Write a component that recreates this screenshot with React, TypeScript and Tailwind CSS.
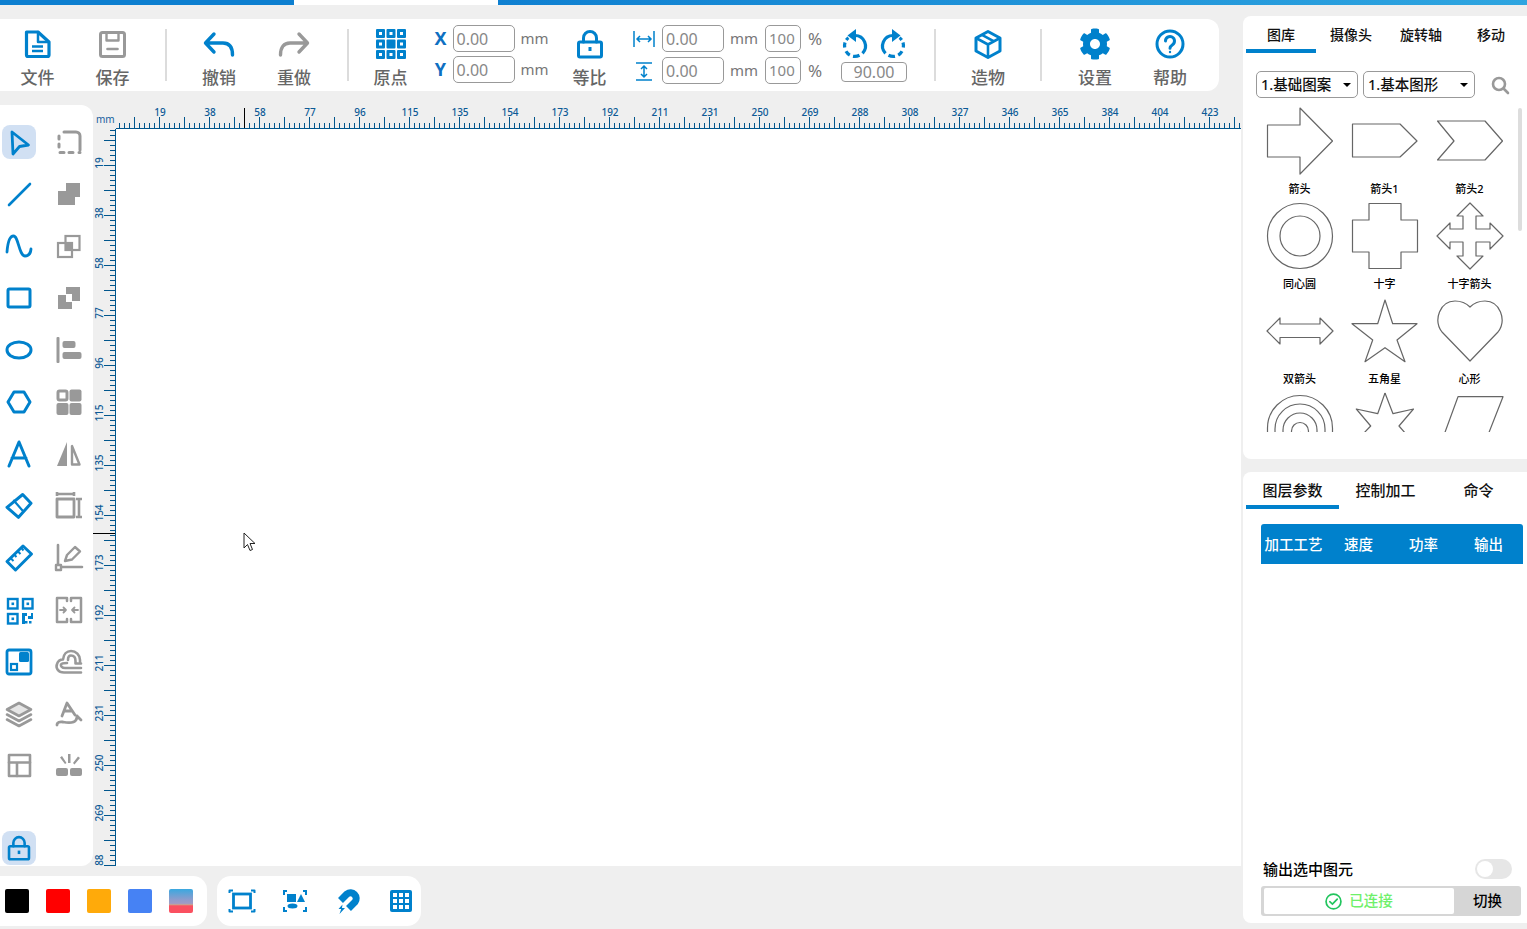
import React from "react";
import { FaCog } from "react-icons/fa";

const B = "#0081cc";
const G = "#999999";
const FONT = { fontFamily: '"Noto Sans","Noto Sans CJK SC",sans-serif' };

type IP = { c?: string; children: React.ReactNode; s?: number; w?: number; h?: number; vb?: string };
function Ico({ c = B, children, s = 3, w = 30, h = 30, vb = "0 0 30 30" }: IP) {
  return (
    <svg width={w} height={h} viewBox={vb} fill="none" stroke={c} strokeWidth={s} strokeLinecap="round" strokeLinejoin="round" className="block shrink-0">
      {children}
    </svg>
  );
}

const originCells = [0, 1, 2].flatMap((r) => [0, 1, 2].map((k) => ({ r, k })));

const lockBody = (
  <>
    <path d="M8.5 13V9a6.5 6.5 0 0 1 13 0v4" strokeWidth={3} />
    <rect x="3.5" y="13" width="23" height="15" rx="1.5" />
    <rect x="13.5" y="18" width="3" height="4" fill={B} stroke="none" />
  </>
);

const top: Record<string, React.ReactNode> = {
  file: (
    <Ico>
      <path d="M3.500 3h11.500l11 10v13a1.5 1.5 0 0 1-1.5 1.5h-19.500A1.500 1.500 0 0 1 3.500 26Z" strokeWidth={3.200} />
      <path d="M15 3v10h10" strokeWidth={2.500} />
      <path d="M9 17.500h11M9 22h11" strokeWidth={2.400} strokeLinecap="butt" />
    </Ico>
  ),
  save: (
    <Ico c={G}>
      <rect x="2.500" y="3.500" width="24" height="24" rx="2" />
      <path d="M8.500 4v7.500h12V4" strokeWidth={2.400} />
      <path d="M9.500 20h10" strokeWidth={2.600} />
    </Ico>
  ),
  undo: (
    <Ico w={32} vb="0 0 32 30" s={3.400}>
      <path d="M11 5 2.500 14l8.500 9M3 14h17c6 0 9.500 4 9.500 12" />
    </Ico>
  ),
  redo: (
    <Ico w={32} vb="0 0 32 30" c={G} s={3.400}>
      <path d="M21 5l8.500 9L21 23M29 14H12C6 14 2.500 18 2.500 26" />
    </Ico>
  ),
  origin: (
    <svg width="30" height="30" viewBox="0 0 30 30" className="block">
      {originCells.map(({ r, k }) => (
        <g key={`${r}${k}`}>
          <rect x={k * 10.5} y={r * 10.5} width="9" height="9" rx="1" fill={B} />
          {!(r === 1 && k === 1) && <rect x={k * 10.5 + 3} y={r * 10.5 + 3} width="3" height="3" fill="#fff" />}
        </g>
      ))}
    </svg>
  ),
  lock: <Ico>{lockBody}</Ico>,
  box: (
    <Ico>
      <path d="M15 2.500 27 9v13l-12 6.500L3 22V9Z" />
      <path d="M3 9l12 6.500L27 9M15 15.500v13M9 5.800l12 6.500" strokeWidth={2.600} strokeLinecap="butt" />
    </Ico>
  ),
  help: (
    <Ico>
      <circle cx="15" cy="15" r="13" />
      <path d="M10.500 12a4.500 4.500 0 1 1 7 3.700c-1.700 1.100-2.500 2-2.500 3.600" />
      <circle cx="15" cy="23" r="1.200" fill={B} stroke="none" />
    </Ico>
  ),
};

function Rotate({ flip }: { flip?: boolean }) {
  return (
    <svg width="30" height="30" viewBox="0 0 30 30" className={flip ? "block -scale-x-100" : "block"} fill="none" stroke={B} strokeWidth="3.200">
      <path d="M15 6.500A10.500 10.500 0 0 1 22.500 24.300" />
      <path d="M19.500 26.300A10.500 10.500 0 0 1 13 27.300" />
      <path d="M9.800 26.200A10.500 10.500 0 0 1 6 22.300" />
      <path d="M4.700 18.500A10.500 10.500 0 0 1 5 13.500" />
      <path d="M6.300 11A10.500 10.500 0 0 1 8.500 8.800" />
      <path d="M16 0 7.500 6.500 16 13Z" fill={B} stroke="none" />
    </svg>
  );
}

const side: [React.ReactNode, React.ReactNode][] = [
  [
    <Ico s={2.800}><path d="M8 5 24.500 18 15.500 19.500 9 27Z" /></Ico>,
    <Ico c={G} s={3}><path d="M10 5h12a4 4 0 0 1 4 4v14M26 25.500h-1M19 25.500h-4M10 25.500H6M5 20v-3M5 12V9" /></Ico>,
  ],
  [
    <Ico s={2.600}><path d="M5 26 26 5" /></Ico>,
    <svg width="30" height="30" viewBox="0 0 30 30" className="block"><path d="M12 4h14v14h-5v8H4V12h8Z" fill={G} /></svg>,
  ],
  [
    <Ico s={2.800}><path d="M3 21C4 8 7 5 9.500 5c5 0 5.500 20 11.500 20 3 0 5.500-2 6-7" /></Ico>,
    <svg width="30" height="30" viewBox="0 0 30 30" className="block">
      <rect x="11.500" y="5" width="14" height="14" fill="none" stroke={G} strokeWidth="2.200" />
      <rect x="4" y="12" width="14" height="14" fill="none" stroke={G} strokeWidth="2.200" />
      <rect x="12" y="12.500" width="6" height="6" fill={G} />
    </svg>,
  ],
  [
    <Ico s={3}><rect x="4" y="6" width="22" height="18" rx="1.500" /></Ico>,
    <svg width="30" height="30" viewBox="0 0 30 30" className="block"><path d="M12 4h14v14h-8v-7h-6Z M4 12h8v7h6v7H4Z" fill={G} /></svg>,
  ],
  [
    <Ico s={3}><ellipse cx="15" cy="15" rx="12" ry="8" /></Ico>,
    <svg width="30" height="30" viewBox="0 0 30 30" className="block">
      <rect x="2.500" y="2" width="3" height="26" rx="1" fill={G} />
      <rect x="8.500" y="6" width="13" height="7" rx="2" fill={G} />
      <rect x="8.500" y="17" width="19" height="7" rx="2" fill={G} />
    </svg>,
  ],
  [
    <Ico s={3}><path d="M10 5h10l6 10-6 10H10L4 15Z" /></Ico>,
    <svg width="30" height="30" viewBox="0 0 30 30" className="block">
      <rect x="4" y="4" width="9" height="9" rx="1.500" fill="none" stroke={G} strokeWidth="3" />
      <rect x="15.500" y="2.500" width="12" height="12" rx="2" fill={G} />
      <rect x="2.500" y="16" width="12" height="12" rx="2" fill={G} />
      <rect x="15.500" y="16" width="12" height="12" rx="2" fill={G} />
    </svg>,
  ],
  [
    <Ico s={3}><path d="M5 27 15 3l10 24M8 19h14" /></Ico>,
    <svg width="30" height="30" viewBox="0 0 30 30" className="block">
      <path d="M13 3v24H3Z" fill={G} />
      <path d="M18 7v18.500H25.500Z" fill="none" stroke={G} strokeWidth="2.400" strokeLinejoin="round" />
    </svg>,
  ],
  [
    <Ico s={3}><path d="M18.700 3.500 27 12.300 14.500 26.300 3 16.300Z" /><path d="M10 9.700 18.700 19.700" strokeWidth={2.200} /></Ico>,
    <Ico c={G} s={2.800}>
      <rect x="3" y="8" width="17" height="18" />
      <path d="M3 3h17M25 8v18M22 8h6M22 26h6M3 1v4M20 1v4" strokeWidth={2.600} strokeLinecap="butt" />
    </Ico>,
  ],
  [
    <Ico s={3}><path d="M19 3 27.500 11 11.500 27 3 18.500Z" /><path d="M6.500 15l3 3M10 11.500l2.500 2.500M13.500 8l3 3M17 4.500l2.500 3" strokeWidth={2} strokeLinecap="butt" /></Ico>,
    <Ico c={G} s={2.400}>
      <path d="M4 2v22M4 24h24" strokeWidth={2.600} />
      <rect x="2" y="22" width="5" height="5" fill="#fff" />
      <path d="M11 18l2-6L21 4l5 4.500-8 8Z M11 18l7-1.500" />
    </Ico>,
  ],
  [
    <svg width="30" height="30" viewBox="0 0 30 30" className="block">
      {[[3, 3], [18, 3], [3, 18]].map(([x, y]) => (
        <g key={`${x}${y}`}>
          <rect x={x + 1} y={y + 1} width="9.500" height="9.500" fill="none" stroke={B} strokeWidth="2.400" />
          <rect x={x + 4.500} y={y + 4.500} width="2.600" height="2.600" fill={B} />
        </g>
      ))}
      <path d="M18 18h5v3h4v-3h2v6h-5v-3h-3v8h-3ZM25 26h2.500v2.500H25ZM21 26h2.500v2.500H21Z" fill={B} />
    </svg>,
    <Ico c={G} s={2.500}>
      <path d="M12 3H3v24h9M18 3h9v24h-9M13 3v3M17 3v3M13 24v3M17 24v3" />
      <path d="M6 15h6M9.500 12.500l2.500 2.500-2.500 2.500M24 15h-6M20.500 12.500 18 15l2.500 2.500" strokeWidth={1.800} />
    </Ico>,
  ],
  [
    <svg width="30" height="30" viewBox="0 0 30 30" className="block">
      <rect x="3" y="3" width="24" height="24" rx="2" fill="none" stroke={B} strokeWidth="2.800" />
      <rect x="15" y="5" width="10" height="10" rx="1.500" fill={B} />
      <rect x="7" y="17" width="6" height="6" fill="none" stroke={B} strokeWidth="2.200" />
    </svg>,
    <Ico c={G} s={2.600}>
      <path d="M27 25.500H10C4 25.500 1.500 21 3 17 4 14 6.500 12.500 9 12.500 9.500 7 13 4 17 4 22 4 26 8 26 13V15" />
      <path d="M27 21H11C8 21 6.500 19 7 17.500 7.500 16.500 9 16 13 16M14 13C14 10 15 8.500 17 8.500 20 8.500 21.500 10.500 21.500 14V16.500H27" />
    </Ico>,
  ],
  [
    <svg width="30" height="30" viewBox="0 0 30 30" className="block" fill="none" stroke={G} strokeWidth="2.600" strokeLinejoin="round" strokeLinecap="round">
      <path d="M15 4 27 10.500 15 17 3 10.500Z" fill="#9a9a9a" fillOpacity="0.25" />
      <path d="M3 15.500 15 22 27 15.500M3 20.500 15 27 27 20.500" />
    </svg>,
    <Ico c={G} s={2.800}>
      <path d="M8 17 13 4 21 16M10.500 12h7" />
      <path d="M3 26c0-3 3-3.500 6-3 5 1 11 1 13-2 1-1.500 1-3 1-4M23 17l4 4" />
    </Ico>,
  ],
  [
    <Ico c={G} s={2.600}><rect x="5" y="4" width="21" height="21" /><path d="M5 11.500h21M13 11.500V25" /></Ico>,
    <svg width="30" height="30" viewBox="0 0 30 30" className="block" fill={G}>
      <rect x="2" y="17" width="12" height="8" rx="2" />
      <rect x="16" y="17" width="12" height="8" rx="2" />
      <path d="M14 3h2.500v9H14ZM6 6.500 8 5l4.500 7-1.500 1ZM24 5.500 26 7l-5.500 6.500-1.500-1.500Z" />
    </svg>,
  ],
];

function ToolBtn({ icon, label, cls = "" }: { icon: React.ReactNode; label: string; cls?: string }) {
  return (
    <div className={`w-[75px] shrink-0 flex flex-col items-center pt-[10px] ${cls}`}>
      <div className="h-[30px] flex items-center justify-center">{icon}</div>
      <div className="mt-[7px] text-[17px] leading-[24px] font-medium text-[#666666]">{label}</div>
    </div>
  );
}

function Divider({ cls = "" }: { cls?: string }) {
  return <div className={`w-[2px] h-[52px] self-center shrink-0 bg-[#dcdcdc] ${cls}`} />;
}

function Field({ w, text, size = "text-[16px]" }: { w: string; text: string; size?: string }) {
  return (
    <div className={`${w} h-[27px] shrink-0 border border-[#999999] rounded-[5px] flex items-center pl-[3px] ${size} text-[#888888]`}>{text}</div>
  );
}

const Unit = ({ t, cls }: { t: string; cls: string }) => (
  <div className={`${cls} shrink-0 text-[15px] leading-[27px] text-[#777777]`}>{t}</div>
);
const Pct = () => <div className="ml-[7px] w-[15px] shrink-0 text-[17px] leading-[27px] text-[#777777]">%</div>;

const xLabels = [19, 38, 58, 77, 96, 115, 135, 154, 173, 192, 211, 231, 250, 269, 288, 308, 327, 346, 365, 384, 404, 423];
const yLabels = [19, 38, 58, 77, 96, 115, 135, 154, 173, 192, 211, 231, 250, 269, 288];
const RC = "#00558c";
const RT = "#0c5a96";

function RulerX() {
  const W = 1125;
  const ticks: React.ReactNode[] = [];
  for (let i = 0; 3.5 + i * 5 < W; i++) {
    const x = 3.5 + i * 5;
    const tall = (x - 18.5) % 25 === 0;
    ticks.push(<line key={i} x1={x} x2={x} y1={tall ? 12 : 18} y2={23} stroke={RC} strokeWidth="1" />);
  }
  return (
    <svg width={W} height="24" className="block shrink-0">
      {ticks}
      <line x1="0" x2={W} y1="23.500" y2="23.500" stroke={RC} strokeWidth="1" />
      <line x1="128.500" x2="128.500" y1="3" y2="23" stroke="#000" strokeWidth="1" />
      {xLabels.map((n, i) => (
        <text key={n} x={44 + i * 50} y="10.500" textAnchor="middle" fontSize="10" fontWeight="500" fill={RT} fontFamily="Noto Sans">{n}</text>
      ))}
    </svg>
  );
}

function RulerY() {
  const H = 738;
  const ticks: React.ReactNode[] = [];
  for (let i = 0; 1.5 + i * 5 < H; i++) {
    const y = 1.5 + i * 5;
    const tall = (y - 11.5) % 25 === 0;
    ticks.push(<line key={i} y1={y} y2={y} x1={tall ? 11 : 17} x2={23} stroke={RC} strokeWidth="1" />);
  }
  return (
    <svg width="23" height={H} className="block shrink-0">
      {ticks}
      <line x1="22.500" x2="22.500" y1="0" y2={H} stroke={RC} strokeWidth="1" />
      <line x1="0" x2="22" y1="404.500" y2="404.500" stroke="#000" strokeWidth="1" />
      {yLabels.map((n, i) => (
        <text key={n} transform={`translate(10 ${34 + i * 50}) rotate(-90)`} textAnchor="middle" fontSize="10" fontWeight="500" fill={RT} fontFamily="Noto Sans">{n}</text>
      ))}
    </svg>
  );
}

const SP = { fill: "none", stroke: "#666666", strokeWidth: 1.2, strokeLinejoin: "round" as const };
function Shape({ d }: { d: string }) {
  return (
    <svg width="68" height="68" viewBox="-1 -1 68 68" className="block">
      <path d={d} {...SP} />
    </svg>
  );
}

const shapes: { n: string; el: React.ReactNode }[] = [
  { n: "箭头", el: <Shape d="M0.500 17H33V0L65.500 33 33 66V49H0.500Z" /> },
  { n: "箭头1", el: <Shape d="M0.500 16H48L65 33 48 49H0.500Z" /> },
  { n: "箭头2", el: <Shape d="M0.500 13H48L65.500 33 48 52H0.500L17 33Z" /> },
  { n: "同心圆", el: <Shape d="M0.500 33a32.500 32.500 0 1 0 65 0a32.500 32.500 0 1 0-65 0M13 33a20 20 0 1 0 40 0a20 20 0 1 0-40 0" /> },
  { n: "十字", el: <Shape d="M17 0.500H49V17H65.500V49H49V65.500H17V49H0.500V17H17Z" /> },
  { n: "十字箭头", el: <Shape d="M33 0 46 13H39V26H53V20L66 33 53 46V39H39V53H46L33 66 20 53H26V39H13V46L0 33 13 20V26H26V13H20Z" /> },
  { n: "双箭头", el: <Shape d="M0 33 13 20V26H53V20L66 33 53 46V39.500H13V46Z" /> },
  { n: "五角星", el: <Shape d="M33 2 40.700 25.700H65L45 42 53 63.700 33 49.700 13 63.700 20.700 42 0 25.700H25.700Z" /> },
  { n: "心形", el: <Shape d="M33 63 5 34C-4 22 3 3 18 3 25 3 30 6 33 9 36 6 41 3 48 3 63 3 70 22 61 34Z" /> },
  {
    n: "",
    el: <Shape d="M0.500 42V35A32.500 32.500 0 0 1 65.500 35V42M8 42V36A25 25 0 0 1 58 36V42M16 42V37A17 17 0 0 1 50 37V42M24.500 42V38A8.500 8.500 0 0 1 41.500 38C41.500 43 35 43 33 39" />,
  },
  { n: "", el: <Shape d="M33 0 25.700 20.700 4.300 16 18.700 33 11 41M33 0 41 20.700 61.500 16 47 33 54 41" /> },
  { n: "", el: <Shape d="M7 42 21 3.700H66L51 42" /> },
];

function Tab({ t, w, on, cls }: { t: string; w: string; on?: boolean; cls: string }) {
  return (
    <div className={`${w} h-[37px] leading-[20px] text-center border-b-4 font-medium ${cls} ${on ? "border-[#0081cc]" : "border-transparent"}`}>{t}</div>
  );
}

function Sel({ t, w }: { t: string; w: string }) {
  return (
    <div className={`${w} h-[27px] border border-[#999999] rounded-[5px] pl-[4px] pr-[6px] flex items-center justify-between text-[14.500px] font-medium text-[#111111]`}>
      <span>{t}</span>
      <span className="w-0 h-0 border-x-[4px] border-x-transparent border-t-[4px] border-t-black" />
    </div>
  );
}

export default function App() {
  return (
    <div style={FONT} className="w-[1527px] h-[929px] overflow-hidden bg-[#efefef] flex flex-col">
      <div className="h-[5px] flex shrink-0">
        <div className="w-[294px] bg-[#0d7fd0]" />
        <div className="w-[204px] bg-white" />
        <div className="flex-1 bg-gradient-to-r from-[#0f80d1] to-[#2ea5e0]" />
      </div>
      <div className="flex flex-1 min-h-0">
        <div className="w-[1243px] shrink-0 flex flex-col">
          <div className="mt-[14px] w-[1219px] h-[72px] bg-white rounded-r-[12px] flex items-start shrink-0">
            <ToolBtn icon={top.file} label="文件" />
            <ToolBtn icon={top.save} label="保存" />
            <Divider cls="ml-[15px]" />
            <ToolBtn icon={top.undo} label="撤销" cls="ml-[14.5px]" />
            <ToolBtn icon={top.redo} label="重做" />
            <Divider cls="ml-[15px]" />
            <ToolBtn icon={top.origin} label="原点" cls="ml-[4.5px]" />
            <div className="ml-[5.5px] pt-[6px] flex flex-col gap-[4px] shrink-0">
              {["X", "Y"].map((a) => (
                <div key={a} className="flex items-center">
                  <div className="w-[14px] mr-[5px] text-center text-[18px] font-bold leading-[27px] text-[#0e70c2]">{a}</div>
                  <Field w="w-[62px]" text="0.00" />
                  <Unit t="mm" cls="ml-[6px] w-[28px]" />
                </div>
              ))}
            </div>
            <ToolBtn icon={top.lock} label="等比" cls="ml-[3.5px]" />
            <div className="ml-[4px] pt-[6px] flex flex-col gap-[5px] shrink-0 w-[191px] pl-[1px]">
              <div className="flex items-center">
                <svg width="24" height="27" viewBox="0 0 24 27" className="block shrink-0" fill="none" stroke={B} strokeWidth="1.500">
                  <path d="M2 6v16M22 6v16M5 14h14M8 11l-3 3 3 3M16 11l3 3-3 3" />
                </svg>
                <div className="ml-[6px]"><Field w="w-[62px]" text="0.00" /></div>
                <Unit t="mm" cls="ml-[6px] w-[28px]" />
                <div className="ml-[7px]"><Field w="w-[36px]" text="100" size="text-[15px]" /></div>
                <Pct />
              </div>
              <div className="flex items-center">
                <svg width="24" height="27" viewBox="0 0 24 27" className="block shrink-0" fill="none" stroke={B} strokeWidth="1.500">
                  <path d="M4 6h16M4 23h16M12 9v11M9 12l3-3 3 3M9 17l3 3 3-3" />
                </svg>
                <div className="ml-[6px]"><Field w="w-[62px]" text="0.00" /></div>
                <Unit t="mm" cls="ml-[6px] w-[28px]" />
                <div className="ml-[7px]"><Field w="w-[36px]" text="100" size="text-[15px]" /></div>
                <Pct />
              </div>
            </div>
            <div className="ml-[19px] w-[66px] pt-[10px] flex flex-col items-center shrink-0">
              <div className="flex gap-[8px]">
                <Rotate />
                <Rotate flip />
              </div>
              <div className="mt-[3px] w-[66px] h-[20px] border border-[#999999] rounded-[4px] text-center text-[16px] leading-[19px] text-[#888888]">90.00</div>
            </div>
            <Divider cls="ml-[27px]" />
            <ToolBtn icon={top.box} label="造物" cls="ml-[14.5px]" />
            <Divider cls="ml-[14.5px]" />
            <ToolBtn icon={<FaCog size={32} color={B} />} label="设置" cls="ml-[15.5px]" />
            <ToolBtn icon={top.help} label="帮助" />
          </div>

          <div className="mt-[14px] flex h-[761px] shrink-0">
            <div className="w-[93px] shrink-0 bg-white rounded-r-[12px] pt-[20px] pb-px flex flex-col">
              {side.map((r, i) => (
                <div key={i} className="flex h-[52px] gap-[16px] ml-[2px]">
                  <div className={`w-[34px] h-[34px] flex items-center justify-center rounded-[8px] ${i === 0 ? "bg-[#d1e0f3]" : ""}`}>{r[0]}</div>
                  <div className="w-[34px] h-[34px] flex items-center justify-center">{r[1]}</div>
                </div>
              ))}
              <div className="mt-auto ml-[2px] w-[34px] h-[34px] flex items-center justify-center rounded-[8px] bg-[#d1e0f3]">
                <Ico w={26} h={26}>{lockBody}</Ico>
              </div>
            </div>
            <div className="w-[1148px] flex flex-col shrink-0">
              <div className="flex h-[23px] shrink-0 overflow-visible">
                <div className="w-[23px] shrink-0 pl-[3px] pt-[7px] text-[10px] leading-[14px] text-[#16609e]">mm</div>
                <RulerX />
              </div>
              <div className="flex flex-1 min-h-0 mt-px overflow-hidden">
                <RulerY />
                <div className="relative flex-1 bg-white">
                  <svg width="14" height="20" viewBox="0 0 14 20" className="absolute left-[127px] top-[403px]">
                    <path d="M1 1v15l3.500-3.500 2.500 6 2.500-1-2.500-6h5Z" fill="#fff" stroke="#222" strokeWidth="1" strokeLinejoin="round" />
                  </svg>
                </div>
              </div>
            </div>
          </div>

          <div className="mt-[10px] flex gap-[10px]">
            <div className="h-[50px] w-[207px] bg-white rounded-r-[14px] pl-[5px] flex items-center gap-[17px]">
              <div className="w-[24px] h-[24px] rounded-[2px] bg-black" />
              <div className="w-[24px] h-[24px] rounded-[2px] bg-[#ff0000]" />
              <div className="w-[24px] h-[24px] rounded-[2px] bg-[#ffaa0a]" />
              <div className="w-[24px] h-[24px] rounded-[2px] bg-[#4682f4]" />
              <div className="w-[24px] h-[24px] rounded-[2px] bg-[linear-gradient(#3aa8e0_0%,#8f9ccc_45%,#a09cc4_60%,#d0a088_66%,#fa5060_70%,#fa5060_100%)]" />
            </div>
            <div className="h-[50px] w-[204px] bg-white rounded-[14px] pl-[10px] flex items-center gap-[23px]">
              <Ico s={2.400}>
                <rect x="6.500" y="8" width="17" height="14" strokeWidth={2.800} strokeLinejoin="miter" />
                <path d="M2.500 7V4.500H6M24 4.500h3.500V7M2.500 23v2.500H6M24 25.500h3.500V23" strokeWidth={2} strokeLinecap="butt" />
              </Ico>
              <svg width="30" height="30" viewBox="0 0 30 30" className="block" fill="none" stroke={B} strokeWidth="2">
                <path d="M7 5H4v4M23 5h3v4M4 21v4h3M26 21v4h-3" />
                <rect x="7" y="8" width="9" height="8" fill={B} stroke="none" />
                <path d="M17 16l4-8 4 8Z" fill={B} stroke="none" />
                <ellipse cx="12.500" cy="20" rx="5" ry="2.500" fill={B} stroke="none" />
              </svg>
              <svg width="30" height="30" viewBox="0 0 30 30" className="block">
                <path d="M7.500 14.500 14 8A5.700 5.700 0 0 1 22 16L15.500 22.500" fill="none" stroke={B} strokeWidth="7" />
                <path d="M9 10 14 15M15.500 16.500l5 5" stroke="#fff" strokeWidth="0" fill="none" />
                <path d="M9.500 18.500 5.500 23h2.700L6.500 28 12 22H9Z" fill={B} />
              </svg>
              <svg width="30" height="30" viewBox="0 0 30 30" className="block">
                <rect x="4" y="4" width="22" height="22" rx="2" fill={B} />
                {[0, 1, 2].flatMap((r) => [0, 1, 2].map((k) => (
                  <rect key={`${r}${k}`} x={7 + k * 6} y={7 + r * 6} width="4" height="4" fill="#fff" />
                )))}
              </svg>
            </div>
          </div>
        </div>

        <div className="w-[284px] shrink-0 pt-[11px] pb-[6px] flex flex-col gap-[13px]">
          <div className="h-[443px] bg-white rounded-l-[8px] shrink-0 flex flex-col">
            <div className="flex pl-[3px] text-[14px] text-[#111111]">
              <Tab t="图库" w="w-[70px]" on cls="pt-[9px]" />
              <Tab t="摄像头" w="w-[70px]" cls="pt-[9px]" />
              <Tab t="旋转轴" w="w-[70px]" cls="pt-[9px]" />
              <Tab t="移动" w="w-[70px]" cls="pt-[9px]" />
            </div>
            <div className="mt-[18px] ml-[13px] flex items-center gap-[5px]">
              <Sel t="1.基础图案" w="w-[102px]" />
              <Sel t="1.基本图形" w="w-[112px]" />
              <svg width="20" height="20" viewBox="0 0 20 20" className="block ml-[10px]" fill="none" stroke={G} strokeWidth="2.600" strokeLinecap="round">
                <circle cx="9" cy="9" r="6" />
                <path d="M14 14l4 4" />
              </svg>
            </div>
            <div className="relative mt-[9px] ml-[14px] h-[325px] overflow-hidden">
              <div className="grid grid-cols-[85px_85px_85px]">
                {shapes.map((s, i) => (
                  <div key={i} className="h-[95px] flex flex-col items-center">
                    {s.el}
                    {s.n && <div className="mt-[7px] text-[11px] leading-[13px] font-medium text-black">{s.n}</div>}
                  </div>
                ))}
              </div>
              <div className="absolute right-[5px] top-[1px] w-[4px] h-[123px] rounded-full bg-[#dddddd]" />
            </div>
          </div>
          <div className="h-[451px] bg-white rounded-l-[8px] shrink-0 flex flex-col">
            <div className="flex pl-[3px] text-[15px] text-[#111111]">
              <Tab t="图层参数" w="w-[93px]" on cls="pt-[8px]" />
              <Tab t="控制加工" w="w-[93px]" cls="pt-[8px]" />
              <Tab t="命令" w="w-[93px]" cls="pt-[8px]" />
            </div>
            <div className="mt-[15px] ml-[18px] w-[262px] h-[40px] bg-[#0081cc] rounded-t-[3px] pt-[2px] pr-[2px] grid grid-cols-4 items-center text-center text-[14.500px] font-medium text-white">
              <div>加工工艺</div>
              <div>速度</div>
              <div>功率</div>
              <div>输出</div>
            </div>
            <div className="mt-auto ml-[20px] mr-[15px] flex items-center justify-between h-[20px]">
              <div className="text-[15px] font-medium text-black">输出选中图元</div>
              <div className="w-[37px] h-[20px] rounded-full bg-[#e6e6e6] pl-[2px] flex items-center">
                <div className="w-[16px] h-[16px] rounded-full bg-white" />
              </div>
            </div>
            <div className="mt-[7px] mb-[7px] ml-[18px] w-[260px] h-[30px] bg-[#d6d6d6] rounded-[3px] flex">
              <div className="ml-[3px] my-[2px] w-[190px] bg-white rounded-[2px] flex items-center justify-center gap-[7px] text-[14.500px] font-medium text-[#6ff06a]">
                <svg width="17" height="17" viewBox="0 0 16 16" className="block" fill="none" stroke="#22c55e" strokeWidth="1.600" strokeLinecap="round">
                  <circle cx="8" cy="8" r="7" />
                  <path d="M4.500 8.200 7 10.500 11.500 5.800" />
                </svg>
                <span>已连接</span>
              </div>
              <div className="flex-1 flex items-center justify-center text-[14.500px] font-medium text-black">切换</div>
            </div>
          </div>
        </div>
      </div>
    </div>
  );
}
